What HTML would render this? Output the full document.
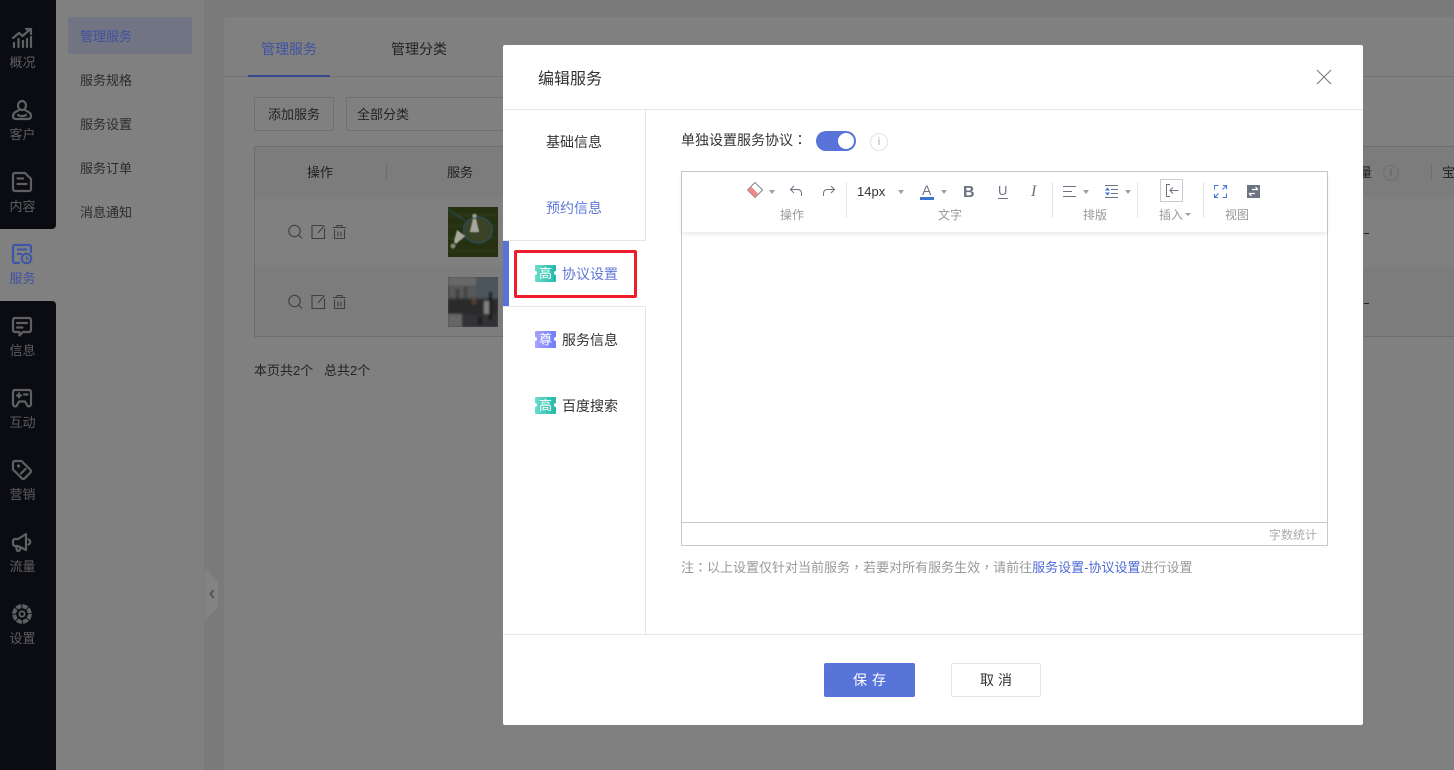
<!DOCTYPE html>
<html lang="zh">
<head>
<meta charset="utf-8">
<title>编辑服务</title>
<style>
*{box-sizing:border-box;margin:0;padding:0}
html,body{width:1454px;height:770px;overflow:hidden;background:#7a7a7a}
body{position:relative;font-family:"Liberation Sans","Noto Sans CJK SC",sans-serif;font-size:13px;color:#333}
.a{position:absolute}
.t{position:absolute;white-space:nowrap;line-height:20px;height:20px}
.tc{font-family:"Noto Sans CJK TC",sans-serif}
svg{position:absolute;overflow:visible}
.rail{left:0;width:56px;background:#0b0c11}
.rl{position:absolute;left:0;width:45px;text-align:center;font-size:13px;line-height:18px;color:#5c5d60;white-space:nowrap}
.ic{fill:none;stroke:#5f6063;stroke-width:2.2;stroke-linejoin:round;stroke-linecap:round}
.nav{left:80px;color:#2b2b2b}
.dk{color:#222}
.tb{fill:none;stroke:#6b7280;stroke-width:1}
.car{position:absolute;width:0;height:0;border-left:3px solid transparent;border-right:3px solid transparent;border-top:4px solid #9a9fa9}
.vs{position:absolute;width:1px;background:#e6e6e6;top:182px;height:36px}
.badge{position:absolute;left:535px;width:21px;height:17px;color:#fff;font-size:13px;line-height:17px;text-align:center;border-radius:1px}
.badge:before,.badge:after{content:"";position:absolute;top:6px;width:4px;height:4px;border-radius:50%;background:#fff}
.badge:before{left:-2px}.badge:after{right:-2px}
.g{background:linear-gradient(90deg,#6bdccb,#22b8a8)}
.p{background:linear-gradient(90deg,#a8a2fb,#6f7bfa)}
.mi{font-size:14px;color:#333}
</style>
</head>
<body>
<!-- background layers -->
<div class="a" style="left:56px;top:0;width:148px;height:770px;background:#808080"></div>
<div class="a" style="left:224px;top:17px;width:1230px;height:753px;background:#808080;border-radius:4px 0 0 0"></div>
<div class="a" style="left:224px;top:76px;width:1230px;height:1px;background:#727272"></div>

<!-- rail -->
<div class="a" style="left:0;top:229px;width:56px;height:72px;background:#808080"></div>
<div class="a rail" style="top:0;height:229px;border-radius:0 0 4px 0"></div>
<div class="a rail" style="top:301px;height:469px;border-radius:0 4px 0 0"></div>

<svg style="left:12px;top:28px" width="20" height="20" viewBox="0 0 20 20"><path class="ic" d="M1 10 7 5l3.500 3L18 1.500M14 1H19V6" stroke-width="2"/><path class="ic" d="M2 19v-4M6.500 19v-8M11 19v-6M15 19v-8M19 19v-10" stroke-width="2" stroke-linecap="butt"/></svg>
<div class="rl" style="top:54px">概况</div>
<svg style="left:12px;top:100px" width="20" height="20" viewBox="0 0 20 20"><ellipse class="ic" cx="10" cy="5.500" rx="4" ry="4.500"/><path class="ic" d="M7 10C4 12 1 12.500 1 16 1 18 2 19 4 19H16C18 19 19 18 19 16 19 12.500 16 12 13 10"/><path class="ic" d="M6 15C8 16.500 12 16.500 14 15"/></svg>
<div class="rl" style="top:126px">客户</div>
<svg style="left:12px;top:172px" width="20" height="20" viewBox="0 0 20 20"><path class="ic" d="M3 1H13L19 7V17C19 18.200 18.200 19 17 19H3C1.800 19 1 18.200 1 17V3C1 1.800 1.800 1 3 1Z"/><path class="ic" d="M5.500 6.500H11M5.500 12H14.500" stroke-linecap="butt"/></svg>
<div class="rl" style="top:198px">内容</div>
<svg style="left:12px;top:244px" width="20" height="20" viewBox="0 0 20 20"><path fill="none" stroke="#3c55a8" stroke-width="2.200" d="M8 19H3C1.800 19 1 18.200 1 17V3C1 1.800 1.800 1 3 1H17C18.200 1 19 1.800 19 3V9"/><path fill="none" stroke="#3c55a8" stroke-width="2" d="M5 5.500H15M5 10H10"/><circle cx="14.500" cy="14.500" r="4.800" fill="none" stroke="#3c55a8" stroke-width="2"/><path fill="none" stroke="#3c55a8" stroke-width="1.200" d="M14.500 12V15H17"/></svg>
<div class="rl" style="top:270px;color:#3f51a3">服务</div>
<svg style="left:12px;top:317px" width="20" height="20" viewBox="0 0 20 20"><path class="ic" d="M3 1H17C18.200 1 19 1.800 19 3V13C19 14.200 18.200 15 17 15H11L7.500 18.500V15H3C1.800 15 1 14.200 1 13V3C1 1.800 1.800 1 3 1Z"/><path class="ic" d="M5 6H15M5 10.500H10.500" stroke-linecap="butt"/></svg>
<div class="rl" style="top:342px">信息</div>
<svg style="left:12px;top:389px" width="20" height="19" viewBox="0 0 20 19"><path class="ic" d="M3 1H17C18.200 1 19 1.800 19 3V15C19 17 17 18 15.500 17L13 12.500H7L4.500 17C3 18 1 17 1 15V3C1 1.800 1.800 1 3 1Z"/><path class="ic" stroke-width="1.500" d="M5 6.500H9M7 4.500V8.500M12 5.500H15.500" stroke-linecap="butt"/></svg>
<div class="rl" style="top:414px">互动</div>
<svg style="left:12px;top:460px" width="20" height="20" viewBox="0 0 20 20"><path class="ic" d="M3 1H9.500L18.200 9.700C19.200 10.700 19.200 11.800 18.200 12.800L12.800 18.200C11.800 19.200 10.700 19.200 9.700 18.200L1 9.500V3C1 1.800 1.800 1 3 1Z"/><circle cx="6.500" cy="6" r="1.600" fill="#5f6063"/><path class="ic" stroke-width="2" d="M9 13.500 13.500 9"/></svg>
<div class="rl" style="top:486px">营销</div>
<svg style="left:12px;top:533px" width="20" height="19" viewBox="0 0 20 19"><path class="ic" d="M14 1 6 6H3C1.800 6 1 7 1 8V10.500C1 12 1.800 13 3 13H6L14 17ZM16.500 6.500C18.800 7.500 18.800 10.500 16.500 11.500M4.500 13V16C4.500 17.200 5.200 18 6.200 18S8 17.200 8 16V14"/></svg>
<div class="rl" style="top:558px">流量</div>
<svg style="left:12px;top:604px" width="20" height="20" viewBox="0 0 20 20"><circle cx="10" cy="10" r="7.800" fill="none" stroke="#5f6063" stroke-width="4" stroke-dasharray="5.200 .93"/><circle cx="10" cy="10" r="2.600" fill="#0b0c11" stroke="#5f6063" stroke-width="1.800"/><circle cx="10" cy="4.500" r="1" fill="#0b0c11"/><circle cx="10" cy="15.500" r="1" fill="#0b0c11"/><circle cx="4.500" cy="10" r="1" fill="#0b0c11"/><circle cx="15.500" cy="10" r="1" fill="#0b0c11"/><circle cx="6.100" cy="6.100" r="1" fill="#0b0c11"/><circle cx="13.900" cy="6.100" r="1" fill="#0b0c11"/><circle cx="6.100" cy="13.900" r="1" fill="#0b0c11"/><circle cx="13.900" cy="13.900" r="1" fill="#0b0c11"/></svg>
<div class="rl" style="top:630px">设置</div>

<!-- subnav -->
<div class="a" style="left:68px;top:17px;width:124px;height:37px;background:#717482;border-radius:3px"></div>
<div class="t nav" style="top:27px;color:#3f51a3">管理服务</div>
<div class="t nav" style="top:71px">服务规格</div>
<div class="t nav" style="top:115px">服务设置</div>
<div class="t nav" style="top:159px">服务订单</div>
<div class="t nav" style="top:203px">消息通知</div>
<!-- collapse -->
<svg style="left:205px;top:568px" width="14" height="52" viewBox="0 0 14 52"><path d="M0 0 13 13V39L0 52Z" fill="#838383"/><path d="M8.500 22 5.500 26 8.500 30" fill="none" stroke="#555" stroke-width="2"/></svg>

<!-- tabs -->
<div class="t" style="left:261px;top:39px;font-size:14px;color:#3f51a3">管理服务</div>
<div class="t dk" style="left:391px;top:39px;font-size:14px">管理分类</div>
<div class="a" style="left:248px;top:75px;width:82px;height:2px;background:#34498f"></div>

<div class="a" style="left:254px;top:97px;width:80px;height:34px;border:1px solid #707070;border-radius:2px"></div>
<div class="t dk" style="left:268px;top:105px">添加服务</div>
<div class="a" style="left:346px;top:97px;width:170px;height:34px;border:1px solid #707070;border-radius:2px"></div>
<div class="t dk" style="left:357px;top:105px">全部分类</div>

<!-- table -->
<div class="a" style="left:255px;top:147px;width:1199px;height:50px;background:#7c7c7c"></div>
<div class="a" style="left:255px;top:197px;width:1199px;height:70px;background:#808080"></div>
<div class="a" style="left:255px;top:267px;width:1199px;height:69px;background:#7c7c7c"></div>
<div class="a" style="left:254px;top:146px;width:1200px;height:191px;border:1px solid #6e6e6e;border-right:0"></div>
<div class="t dk" style="left:307px;top:163px">操作</div>
<div class="a" style="left:386px;top:163px;width:1px;height:17px;background:#6e6e6e"></div>
<div class="t dk" style="left:447px;top:163px">服务</div>

<svg style="left:288px;top:224px" width="60" height="16" viewBox="0 0 60 16"><g fill="none" stroke="#3f3f3f" stroke-width="1.100"><circle cx="6.500" cy="7" r="5.700"/><path d="M10.500 11 14 14.500"/><path d="M35 1.500H24V14.500H36.500V4.500M30 9 36.500 1.500"/><path d="M45 3.500H58M49 3.500V1.500H54V3.500M46.500 5.500V14.500H56.500V5.500M50 7.500V12.500M53 7.500V12.500"/></g></svg>
<svg style="left:288px;top:294px" width="60" height="16" viewBox="0 0 60 16"><g fill="none" stroke="#3f3f3f" stroke-width="1.100"><circle cx="6.500" cy="7" r="5.700"/><path d="M10.500 11 14 14.500"/><path d="M35 1.500H24V14.500H36.500V4.500M30 9 36.500 1.500"/><path d="M45 3.500H58M49 3.500V1.500H54V3.500M46.500 5.500V14.500H56.500V5.500M50 7.500V12.500M53 7.500V12.500"/></g></svg>

<svg style="left:448px;top:207px;overflow:hidden" width="50" height="50" viewBox="0 0 50 50"><defs><filter id="c"><feGaussianBlur stdDeviation=".5"/></filter></defs><rect width="50" height="50" fill="#25300f"/><g filter="url(#c)"><path d="M0 8H50M0 19H50M0 31H50M0 44H50" stroke="#2a3513" stroke-width="4"/><ellipse cx="30" cy="23" rx="14.500" ry="13" fill="#3b4228" stroke="#27505f" stroke-width="1.200"/><path d="M0 2 17 14" stroke="#27505f" stroke-width="1"/><path d="M25 12H28L31 25H22Z" fill="#a8a89e"/><circle cx="26.500" cy="9" r="2" fill="#a0a096"/><path d="M9 23 17 29 8 37 6 35Z" fill="#a8a89e"/><circle cx="5" cy="39" r="2.500" fill="#8c8474"/></g></svg>
<svg style="left:448px;top:277px;overflow:hidden" width="50" height="50" viewBox="0 0 50 50"><defs><filter id="b"><feGaussianBlur stdDeviation="1"/></filter></defs><rect width="50" height="50" fill="#4c4d4e"/><g filter="url(#b)"><rect x="0" y="0" width="28" height="9" fill="#686868"/><rect x="28" y="0" width="22" height="20" fill="#4c545d"/><rect x="2" y="10" width="26" height="10" fill="#585858"/><rect x="8" y="12" width="3" height="14" fill="#3a3a3a"/><rect x="16" y="10" width="3" height="16" fill="#3f3f3f"/><rect x="0" y="22" width="50" height="15" fill="#2a2a2c"/><rect x="0" y="37" width="14" height="13" fill="#666"/><rect x="14" y="37" width="36" height="13" fill="#333336"/><rect x="36" y="24" width="5" height="13" fill="#808080"/><rect x="41" y="15" width="3" height="28" fill="#151517"/><rect x="24" y="22" width="4" height="5" fill="#5a4030"/><rect x="30" y="40" width="4" height="8" fill="#1b1b1d"/></g></svg>

<div class="t dk" style="left:254px;top:361px">本页共2个</div>
<div class="t dk" style="left:324px;top:361px">总共2个</div>

<!-- right table bits -->
<div class="t dk" style="left:1359px;top:163px;width:13px;overflow:hidden;direction:rtl">量</div>
<div class="a" style="left:1383px;top:165px;width:16px;height:16px;border:1px solid #6e6e6e;border-radius:50%;font-size:11px;line-height:14px;text-align:center;color:#5f5f5f">i</div>
<div class="a" style="left:1431px;top:163px;width:1px;height:17px;background:#6e6e6e"></div>
<div class="t dk" style="left:1442px;top:163px;width:12px;overflow:hidden">宝</div>
<div class="a" style="left:1364px;top:233px;width:5px;height:1px;background:#222"></div>
<div class="a" style="left:1364px;top:303px;width:5px;height:1px;background:#222"></div>

<!-- modal -->
<div class="a" style="left:503px;top:45px;width:860px;height:680px;background:#fff;border-radius:2px"></div>
<div class="a" style="left:503px;top:109px;width:860px;height:1px;background:#e5e5ec"></div>
<div class="t" style="left:538px;top:70px;font-size:16px;color:#333">编辑服务</div>
<svg style="left:1316px;top:69px" width="16" height="16" viewBox="0 0 16 16"><path d="M1 1 15 15M15 1 1 15" stroke="#777" stroke-width="1" fill="none"/></svg>

<!-- left tabs -->
<div class="a" style="left:645px;top:110px;width:1px;height:131px;background:#e5e5ec"></div>
<div class="a" style="left:645px;top:306px;width:1px;height:328px;background:#e5e5ec"></div>
<div class="a" style="left:503px;top:240px;width:143px;height:1px;background:#e5e5ec"></div>
<div class="a" style="left:503px;top:306px;width:143px;height:1px;background:#e5e5ec"></div>
<div class="a" style="left:503px;top:241px;width:6px;height:65px;background:#5874d8"></div>
<div class="t mi" style="left:546px;top:132px">基础信息</div>
<div class="t mi" style="left:546px;top:198px;color:#5f78d9">预约信息</div>
<div class="badge g" style="top:265px">高</div>
<div class="t mi" style="left:562px;top:264px;color:#5f78d9">协议设置</div>
<div class="badge p" style="top:331px">尊</div>
<div class="t mi" style="left:562px;top:330px">服务信息</div>
<div class="badge g" style="top:397px">高</div>
<div class="t mi" style="left:562px;top:396px">百度搜索</div>
<div class="a" style="left:514px;top:250px;width:123px;height:48px;border:3px solid #ec1c2c;border-radius:2px"></div>

<!-- right panel -->
<div class="t" style="left:681px;top:130px;font-size:14px;color:#333">单独设置服务协议<span class="tc" lang="zh-TW">：</span></div>
<div class="a" style="left:816px;top:131px;width:40px;height:20px;border-radius:10px;background:#5874d8"></div>
<div class="a" style="left:838px;top:133px;width:16px;height:16px;border-radius:50%;background:#fff"></div>
<div class="a" style="left:870px;top:133px;width:18px;height:18px;border:1px solid #e3e3e3;border-radius:50%;font-size:11px;line-height:16px;text-align:center;color:#aaa">i</div>

<div class="a" style="left:681px;top:171px;width:647px;height:375px;border:1px solid #c9c9c9"></div>
<div class="a" style="left:682px;top:172px;width:645px;height:60px;background:#fff;box-shadow:0 2px 4px rgba(0,0,0,.09)"></div>
<div class="a" style="left:682px;top:522px;width:645px;height:1px;background:#c9c9c9"></div>
<div class="t" style="left:1269px;top:525px;font-size:12px;color:#aaa">字数统计</div>

<!-- toolbar -->
<svg style="left:747px;top:182px" width="16" height="16" viewBox="0 0 16 16"><path d="M8 .5 15.500 8 8 15.500 .5 8Z" fill="#fff" stroke="#666" stroke-width=".8"/><path d="M.5 8 4 4.500 11.500 12 8 15.500Z" fill="#ea8a8d"/></svg>
<div class="car" style="left:769px;top:190px"></div>
<svg style="left:789px;top:184px" width="14" height="14" viewBox="0 0 14 14"><path class="tb" d="M5 2 1.500 5.500 5 9M1.500 5.500H8.500C11 5.500 12.500 7 12.500 9.500V12"/></svg>
<svg style="left:822px;top:184px" width="14" height="14" viewBox="0 0 14 14"><path class="tb" d="M9 2 12.500 5.500 9 9M12.500 5.500H5.500C3 5.500 1.500 7 1.500 9.500V12"/></svg>
<div class="a vs" style="left:846px"></div>
<div class="t" style="left:857px;top:182px;font-size:13px;color:#333">14px</div>
<div class="car" style="left:898px;top:190px"></div>
<div class="t" style="left:922px;top:180px;font-size:14px;color:#6b7280">A</div>
<div class="a" style="left:920px;top:197px;width:14px;height:3px;background:#3a76d0"></div>
<div class="car" style="left:941px;top:190px"></div>
<div class="t" style="left:963px;top:183px;font-size:16px;font-weight:bold;color:#6b7280">B</div>
<div class="t" style="left:998px;top:181px;font-size:13px;color:#6b7280">U</div>
<div class="a" style="left:998px;top:198px;width:10px;height:1px;background:#6b7280"></div>
<div class="t" style="left:1031px;top:182px;font-size:16px;font-style:italic;font-family:'Liberation Serif',serif;color:#6b7280">I</div>
<div class="a vs" style="left:1052px"></div>
<svg style="left:1063px;top:185px" width="14" height="13" viewBox="0 0 14 13"><path class="tb" d="M0 1.500H13M0 6.500H9M0 11.500H13"/></svg>
<div class="car" style="left:1083px;top:190px"></div>
<svg style="left:1105px;top:185px" width="15" height="13" viewBox="0 0 15 13"><path class="tb" d="M0 .5H13M6 4.500H13M6 8.500H13M0 12.500H13"/><path d="M0 5.500H5L2.500 2.500ZM0 7.500H5L2.500 10.500Z" fill="#3a76d0"/></svg>
<div class="car" style="left:1125px;top:190px"></div>
<div class="a vs" style="left:1137px"></div>
<div class="a" style="left:1160px;top:179px;width:23px;height:23px;border:1px solid #ccc"></div>
<svg style="left:1165px;top:184px" width="14" height="14" viewBox="0 0 14 14"><path class="tb" d="M5 .5H1.500V12.500H5M13.500 6.500H5M8 3.500 5 6.500 8 9.500"/></svg>
<div class="a vs" style="left:1203px"></div>
<svg style="left:1214px;top:185px" width="14" height="14" viewBox="0 0 14 14"><path fill="none" stroke="#3a76d0" d="M.5 4.500V.5H4.500M8.500 12.500H12.500V8.500M9 .5H12.500V4M12.500 .5 8.500 4.500M.5 9V12.500H4M.5 12.500 4.500 8.500"/></svg>
<svg style="left:1247px;top:185px" width="13" height="13" viewBox="0 0 13 13"><rect width="13" height="13" fill="#6b7280"/><path d="M5 4.500H11M8.500 2 11 4.500M8 8.500H2M4.500 11 2 8.500" stroke="#fff" stroke-width="1.200" fill="none"/></svg>

<div class="t" style="left:780px;top:205px;font-size:12px;color:#999">操作</div>
<div class="t" style="left:938px;top:205px;font-size:12px;color:#999">文字</div>
<div class="t" style="left:1083px;top:205px;font-size:12px;color:#999">排版</div>
<div class="t" style="left:1159px;top:205px;font-size:12px;color:#999">插入</div>
<div class="car" style="left:1185px;top:213px;border-top-width:3px"></div>
<div class="t" style="left:1225px;top:205px;font-size:12px;color:#999">视图</div>

<div class="t" style="left:681px;top:557px;color:#999">注<span class="tc" lang="zh-TW">：</span>以上设置仅针对当前服务<span class="tc" lang="zh-TW">，</span>若要对所有服务生效<span class="tc" lang="zh-TW">，</span>请前往<span style="color:#4f6ad6">服务设置-协议设置</span>进行设置</div>

<!-- footer -->
<div class="a" style="left:503px;top:634px;width:860px;height:1px;background:#e5e5ec"></div>
<div class="a" style="left:824px;top:663px;width:91px;height:34px;padding-left:5px;background:#5874d8;border-radius:2px;color:#fff;text-align:center;line-height:34px;letter-spacing:5px;font-size:14px">保存</div>
<div class="a" style="left:951px;top:663px;width:90px;height:34px;padding-left:4px;border:1px solid #e3e3ec;border-radius:2px;color:#333;text-align:center;line-height:32px;letter-spacing:4px;font-size:14px">取消</div>
</body>
</html>
